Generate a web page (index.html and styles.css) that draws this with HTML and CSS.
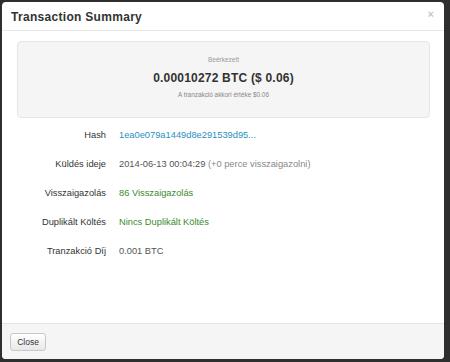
FILE: index.html
```html
<!DOCTYPE html>
<html>
<head>
<meta charset="utf-8">
<link rel="stylesheet" href="styles.css">
</head>
<body>
<div class="modal">
  <div class="modal-header">
    <h3 class="title">Transaction Summary</h3>
    <span class="close-x">×</span>
  </div>
  <div class="modal-body">
    <div class="well">
      <div class="well-label">Beérkezett</div>
      <div class="well-amount">0.00010272 BTC ($ 0.06)</div>
      <div class="well-note">A tranzakció akkori értéke $0.06</div>
    </div>
    <div class="rows">
      <div class="label">Hash</div>
      <div class="value link">1ea0e079a1449d8e291539d95...</div>
      <div class="label">Küldés ideje</div>
      <div class="value">2014-06-13 00:04:29 <span class="muted">(+0 perce visszaigazolni)</span></div>
      <div class="label">Visszaigazolás</div>
      <div class="value green">86 Visszaigazolás</div>
      <div class="label">Duplikált Költés</div>
      <div class="value green">Nincs Duplikált Költés</div>
      <div class="label">Tranzakció Díj</div>
      <div class="value">0.001 BTC</div>
    </div>
  </div>
  <div class="modal-footer">
    <button class="btn">Close</button>
  </div>
</div>
</body>
</html>
```
FILE: styles.css
```css
html, body {
  margin: 0;
  padding: 0;
}
body {
  background: #2e2e2e;
  width: 450px;
  height: 362px;
  overflow: hidden;
  font-family: "Liberation Sans", Arial, sans-serif;
  color: #333;
}
.modal {
  margin: 2px 6px 0 2px;
  height: 357px;
  background: #fff;
  border-radius: 4px;
  display: flex;
  flex-direction: column;
  overflow: hidden;
}
.modal-header {
  height: 28px;
  border-bottom: 1px solid #e8e8e8;
  display: flex;
  align-items: center;
  justify-content: space-between;
  padding: 0 10px 0 9px;
}
.title {
  margin: 0;
  font-size: 12px;
  font-weight: bold;
  color: #333;
  letter-spacing: 0.3px;
  padding-top: 1px;
}
.close-x {
  font-size: 11px;
  font-weight: bold;
  color: #c8c8c8;
  margin-top: -4px;
}
.modal-body {
  flex: 1;
  padding: 10px 14px 0 15px;
}
.well {
  background: #f5f5f5;
  border: 1px solid #e6e6e6;
  border-radius: 4px;
  text-align: center;
  padding-top: 13px;
  box-sizing: border-box;
  height: 77px;
}
.well-label {
  font-size: 6.5px;
  line-height: 10px;
  color: #999;
}
.well-amount {
  margin-top: 5px;
  font-size: 12px;
  line-height: 16px;
  font-weight: bold;
  color: #333;
  letter-spacing: 0.2px;
}
.well-note {
  margin-top: 4px;
  font-size: 6.4px;
  line-height: 10px;
  color: #888;
}
.rows {
  margin-left: -15px;
  display: grid;
  grid-template-columns: 104px 1fr;
  column-gap: 13px;
  grid-auto-rows: 28.8px;
  align-items: center;
  font-size: 9.3px;
  margin-top: 3px;
}
.label {
  text-align: right;
  color: #333;
}
.value {
  color: #555;
}
.link {
  color: #2a8fbd;
}
.green {
  color: #3a8a2e;
}
.muted {
  color: #888;
}
.modal-footer {
  background: #f5f5f5;
  border-top: 1px solid #e3e3e3;
  box-sizing: border-box;
  height: 36px;
  padding: 9px 0 0 8px;
}
.btn {
  display: block;
  width: 36px;
  height: 18px;
  padding: 0;
  font-family: "Liberation Sans", Arial, sans-serif;
  font-size: 8.5px;
  color: #333;
  background: linear-gradient(#ffffff, #e8e8e8);
  border: 1px solid #c8c8c8;
  border-radius: 3px;
}
```
